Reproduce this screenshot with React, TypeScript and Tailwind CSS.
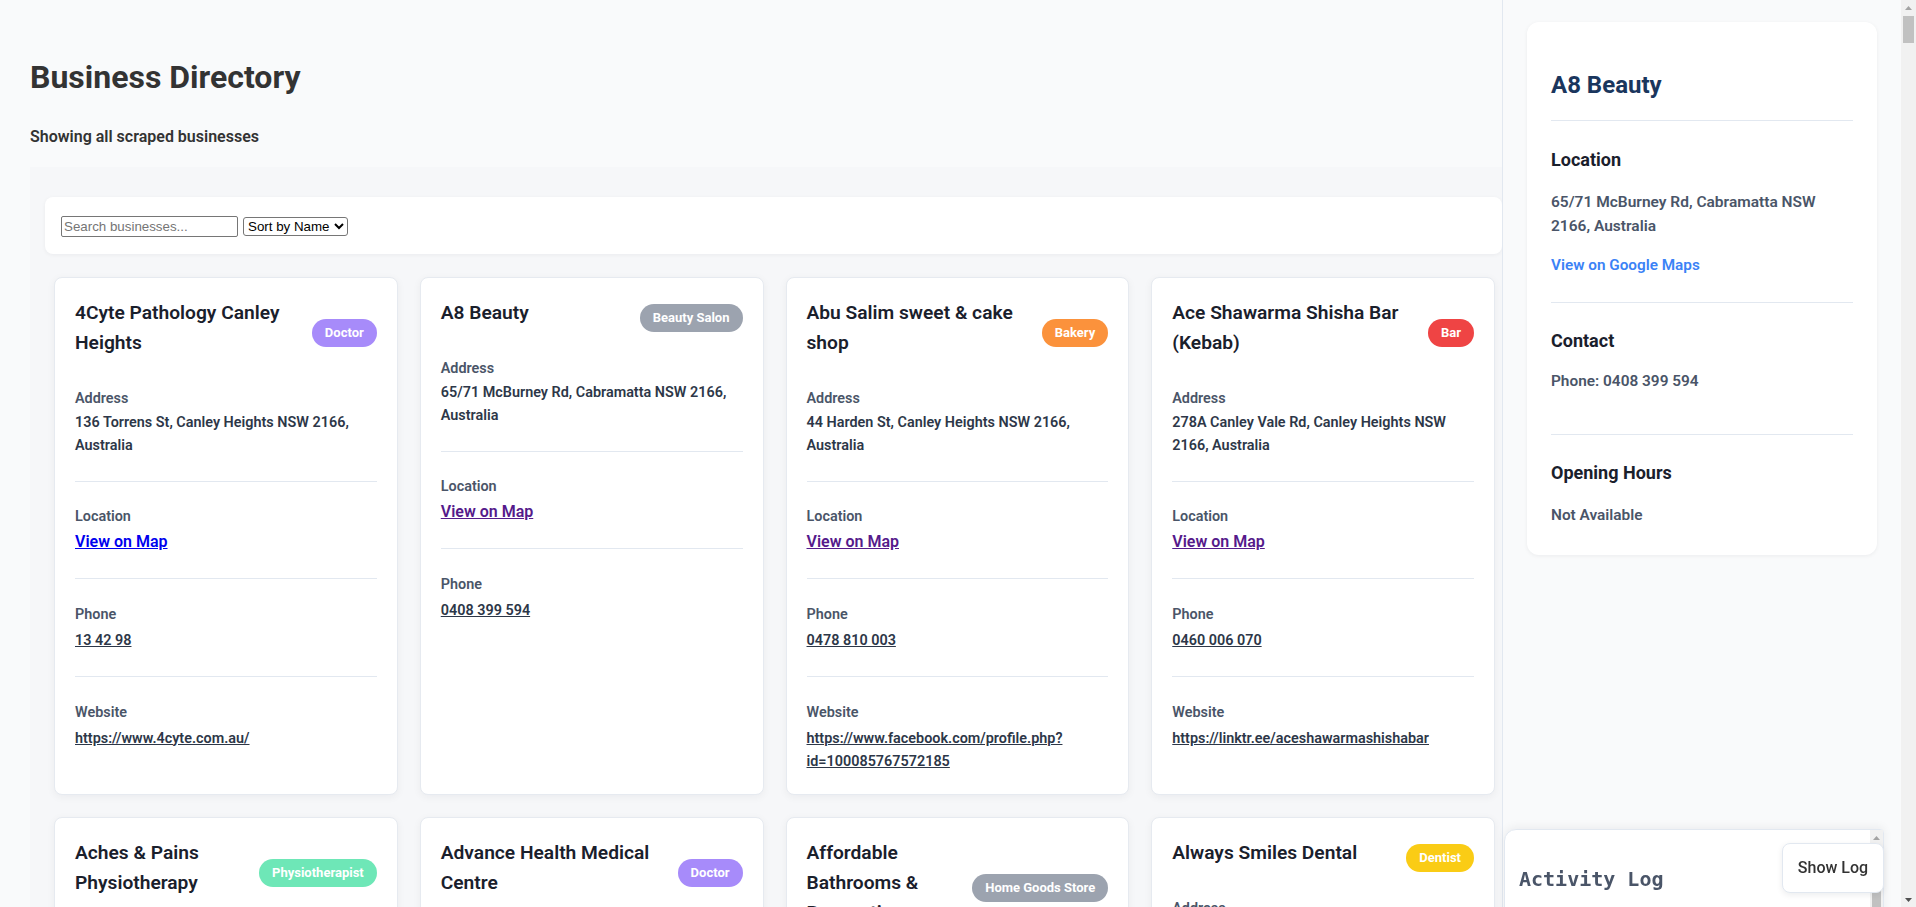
import React from 'react';

type Business = {
  name: string;
  category: string;
  address: string;
  phone: string;
  website?: string;
  mapVisited: boolean;
};

const businesses: Business[] = [
  {
    name: '4Cyte Pathology Canley Heights',
    category: 'Doctor',
    address: '136 Torrens St, Canley Heights NSW 2166, Australia',
    phone: '13 42 98',
    website: 'https://www.4cyte.com.au/',
    mapVisited: false,
  },
  {
    name: 'A8 Beauty',
    category: 'Beauty Salon',
    address: '65/71 McBurney Rd, Cabramatta NSW 2166, Australia',
    phone: '0408 399 594',
    mapVisited: true,
  },
  {
    name: 'Abu Salim sweet & cake shop',
    category: 'Bakery',
    address: '44 Harden St, Canley Heights NSW 2166, Australia',
    phone: '0478 810 003',
    website: 'https://www.facebook.com/profile.php?id=100085767572185',
    mapVisited: true,
  },
  {
    name: 'Ace Shawarma Shisha Bar (Kebab)',
    category: 'Bar',
    address: '278A Canley Vale Rd, Canley Heights NSW 2166, Australia',
    phone: '0460 006 070',
    website: 'https://linktr.ee/aceshawarmashishabar',
    mapVisited: true,
  },
  {
    name: 'Aches & Pains Physiotherapy',
    category: 'Physiotherapist',
    address: '2/247 Canley Vale Rd, Canley Heights NSW 2166, Australia',
    phone: '(02) 9726 1466',
    website: 'https://www.achesandpains.com.au/',
    mapVisited: false,
  },
  {
    name: 'Advance Health Medical Centre',
    category: 'Doctor',
    address: '1/240 Canley Vale Rd, Canley Heights NSW 2166, Australia',
    phone: '(02) 9728 8588',
    mapVisited: false,
  },
  {
    name: 'Affordable Bathrooms & Renovations',
    category: 'Home Goods Store',
    address: '12 Peel St, Canley Heights NSW 2166, Australia',
    phone: '0412 556 781',
    mapVisited: false,
  },
  {
    name: 'Always Smiles Dental',
    category: 'Dentist',
    address: '225 Canley Vale Rd, Canley Heights NSW 2166, Australia',
    phone: '(02) 9724 3377',
    website: 'https://www.alwayssmilesdental.com.au/',
    mapVisited: false,
  },
];

const badgeColors: Record<string, string> = {
  Doctor: 'bg-[#a78bfa]',
  'Beauty Salon': 'bg-[#9ca3af]',
  Bakery: 'bg-[#fb923c]',
  Bar: 'bg-[#ef4444]',
  Physiotherapist: 'bg-[#6ee7b7]',
  'Home Goods Store': 'bg-[#9ca3af]',
  Dentist: 'bg-[#facc15]',
};

const Field = ({
  label,
  first,
  last,
  children,
}: {
  label: string;
  first?: boolean;
  last?: boolean;
  children: React.ReactNode;
}) => (
  <div
    className={`${first ? 'pt-[21px]' : 'pt-[25.5px]'} ${
      last ? 'pb-[1.5px]' : 'border-b border-[#e2e8f0] pb-6'
    }`}
  >
    <p className="text-[14.4px] leading-5 font-semibold text-[#4a5568]">{label}</p>
    {children}
  </div>
);

const BusinessCard = ({ business }: { business: Business }) => (
  <div className="flex flex-col rounded-lg border border-[#e6eaf0] bg-white p-5 shadow-[0_2px_8px_rgba(15,23,42,0.05)]">
    <div className="flex items-center justify-between gap-3">
      <h3 className="mb-[10px] text-[19.2px] leading-[30px] font-semibold text-[#1a202c]">
        {business.name}
      </h3>
      <span
        className={`shrink-0 rounded-full px-[13px] py-[6px] text-[13px] leading-4 font-bold text-white ${
          badgeColors[business.category]
        }`}
      >
        {business.category}
      </span>
    </div>

    <Field label="Address" first>
      <p className="mt-[1.5px] text-[14.4px] leading-[23px] font-semibold text-[#2d3748]">
        {business.address}
      </p>
    </Field>

    <Field label="Location">
      <a
        href="#"
        className={`mt-[3px] block w-fit text-base leading-6 font-semibold underline ${
          business.mapVisited ? 'text-[#551a8b]' : 'text-[#0000ee]'
        }`}
      >
        View on Map
      </a>
    </Field>

    <Field label="Phone" last={!business.website}>
      <a
        href="#"
        className="mt-[4.5px] block w-fit text-[14.4px] leading-[23px] font-semibold text-[#2d3748] underline"
      >
        {business.phone}
      </a>
    </Field>

    {business.website && (
      <Field label="Website" last>
        <a
          href="#"
          className="mt-1 block w-fit text-[14.4px] leading-[23px] font-semibold text-[#2d3748] underline"
        >
          {business.website}
        </a>
      </Field>
    )}
  </div>
);

const logEntries = [
  '[09:12:04] Loaded 248 businesses',
  '[09:12:05] Sorted by name',
  '[09:12:31] Selected A8 Beauty',
  '[09:12:32] Details panel opened',
  '[09:13:10] Map link opened',
  '[09:13:45] Filter cleared',
  '[09:14:02] Selected A8 Beauty',
];

const App = () => {
  return (
    <div className="min-h-screen bg-[#f9fafb] font-['Roboto',sans-serif]">
      <main className="mr-[414px] pl-[30px] pt-[58px] pb-10">
        <h1 className="text-[32px] leading-[38px] font-bold text-[#333333]">Business Directory</h1>
        <p className="mt-[29px] text-base leading-6 font-semibold text-[#333333]">
          Showing all scraped businesses
        </p>

        <div className="mt-[18px] -mr-[15px] bg-[#f6f7f9] pt-[30px] pl-[15px] pr-[15px] pb-6">
          <div className="flex items-center gap-[5px] rounded-lg bg-white px-4 pt-[19px] pb-[17px] shadow-[0_1px_4px_rgba(15,23,42,0.05)]">
            <input
              type="text"
              placeholder="Search businesses..."
              className="h-[21px] w-[177px] rounded-[2px] border border-[#767676] bg-white px-[2px] font-['Liberation_Sans',Arial,sans-serif] text-[13.33px] text-black placeholder:text-[#757575]"
            />
            <select className="h-[19px] w-[105px] rounded-[3px] border border-[#767676] bg-white font-['Liberation_Sans',Arial,sans-serif] text-[13.33px] text-black">
              <option>Sort by Name</option>
              <option>Sort by Category</option>
            </select>
          </div>

          <div className="mt-[23px] ml-[9px] mr-[7px] grid grid-cols-4 gap-[22px]">
            {businesses.map((b) => (
              <BusinessCard key={b.name} business={b} />
            ))}
          </div>
        </div>
      </main>

      <aside className="fixed top-0 right-[15px] h-screen w-[399px] border-l border-[#e2e8f0] bg-[#f9fafb] px-6 pt-[22px]">
        <div className="rounded-xl bg-white px-6 pb-7 shadow-[0_1px_4px_rgba(15,23,42,0.06)]">
          <h2 className="border-b border-[#e2e8f0] pt-[49px] pb-5 text-2xl leading-[29px] font-bold text-[#1a365d]">
            A8 Beauty
          </h2>

          <div className="border-b border-[#e2e8f0] pt-[28px] pb-[25px]">
            <h3 className="text-[18px] leading-[22px] font-bold text-[#1a202c]">Location</h3>
            <p className="mt-[19px] text-[15.5px] leading-6 font-semibold text-[#4a5568]">
              65/71 McBurney Rd, Cabramatta NSW 2166, Australia
            </p>
            <a href="#" className="mt-[15px] block w-fit text-[15.3px] leading-6 font-semibold text-[#3b82f6]">
              View on Google Maps
            </a>
          </div>

          <div className="border-b border-[#e2e8f0] pt-[27px] pb-[41px]">
            <h3 className="text-[18px] leading-[22px] font-bold text-[#1a202c]">Contact</h3>
            <p className="mt-[17px] text-[15.4px] leading-6 font-semibold text-[#4a5568]">
              Phone: 0408 399 594
            </p>
          </div>

          <div className="pt-[27px]">
            <h3 className="text-[18px] leading-[22px] font-bold text-[#1a202c]">Opening Hours</h3>
            <p className="mt-[19px] text-[15.4px] leading-6 font-semibold text-[#4a5568]">Not Available</p>
          </div>
        </div>
      </aside>

      {/* activity log drawer, mostly below the fold */}
      <div className="fixed top-[829px] right-[32px] flex h-[300px] w-[380px] rounded-tl-xl rounded-tr-[4px] border border-[#e2e8f0] bg-white shadow-[0_-2px_10px_rgba(15,23,42,0.06)]">
        <div className="flex-1 overflow-hidden px-[14px] pt-[37px]">
          <h3 className="font-['DejaVu_Sans_Mono',monospace] text-[20px] leading-6 font-bold text-[#4a5568]">
            Activity Log
          </h3>
          <ul className="mt-4 space-y-2 pb-6 font-['DejaVu_Sans_Mono',monospace] text-xs text-[#4a5568]">
            {logEntries.map((entry) => (
              <li key={entry}>{entry}</li>
            ))}
          </ul>
        </div>
        <div className="flex w-[13px] flex-col bg-[#f1f1f1]">
          <div className="flex h-[16px] items-center justify-center">
            <svg width="7" height="4" viewBox="0 0 7 4">
              <path d="M3.5 0L7 4H0z" fill="#a3a3a3" />
            </svg>
          </div>
          <div className="mx-[2px] h-[200px] bg-[#c1c1c1]" />
        </div>
      </div>

      <button className="fixed right-[32px] bottom-[14px] h-[50px] w-[102px] rounded-lg border border-[#e2e8f0] bg-white text-base font-medium text-[#333333] shadow-[0_2px_6px_rgba(15,23,42,0.08)]">
        Show Log
      </button>

      {/* page scrollbar */}
      <div className="fixed top-0 right-0 flex h-screen w-[15px] flex-col bg-[#f1f1f1]">
        <div className="flex h-[15px] items-center justify-center">
          <svg width="7" height="4" viewBox="0 0 7 4">
            <path d="M3.5 0L7 4H0z" fill="#a3a3a3" />
          </svg>
        </div>
        <div className="mx-[2px] mt-[1px] h-[27px] bg-[#c1c1c1]" />
        <div className="flex-1" />
        <div className="flex h-[15px] items-center justify-center">
          <svg width="7" height="4" viewBox="0 0 7 4">
            <path d="M0 0H7L3.5 4z" fill="#505050" />
          </svg>
        </div>
      </div>
    </div>
  );
};

export default App;
